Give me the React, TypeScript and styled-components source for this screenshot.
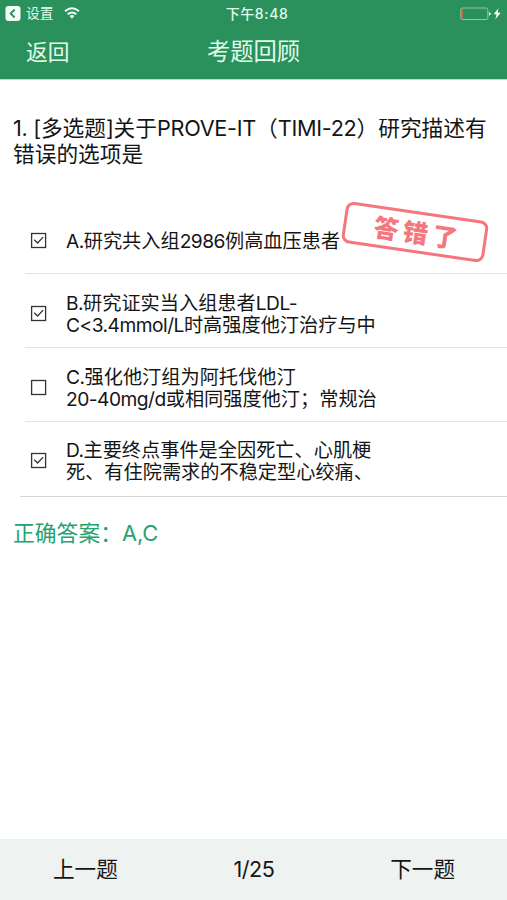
import React from "react";
import styled, { createGlobalStyle } from "styled-components";

const GlobalStyle = createGlobalStyle`
  * { box-sizing: border-box; }
  body {
    margin: 0;
    background: #fff;
    color: #151515;
    font-family: Inter, "Noto Sans CJK SC", sans-serif;
  }
`;

const Screen = styled.div`
  width: 507px;
  height: 900px;
  display: flex;
  flex-direction: column;
  overflow: hidden;
  background: #fff;
`;

const Header = styled.header`
  height: 80px;
  flex: none;
  background: #2a915c;
  border-bottom: 1px solid #b4dfc4;
  color: #e2fbea;
`;

const StatusBar = styled.div`
  height: 27px;
  display: grid;
  grid-template-columns: 1fr auto 1fr;
  align-items: center;
  padding: 0 5px 0 5px;
  font-size: 13.7px;
  line-height: 24px;
`;

const StatusGroup = styled.div<{ $end?: boolean }>`
  display: flex;
  align-items: center;
  justify-content: ${(p) => (p.$end ? "flex-end" : "flex-start")};
`;

const BackApp = styled.span`
  margin: 0 11px 1px 5px;
`;

const Clock = styled.span`
  font-weight: 500;
  font-size: 14px;
  letter-spacing: 0.6px;
  margin: 0 0 0 7px;
`;

const NavBar = styled.nav`
  height: 50px;
  display: grid;
  grid-template-columns: 1fr auto 1fr;
  align-items: center;
  padding: 0 26px;
  font-size: 21.7px;
  line-height: 48px;
`;

const NavTitle = styled.h1`
  margin: 0;
  font-size: 23.3px;
  font-weight: 400;
`;

const Content = styled.main`
  flex: 1;
  padding-top: 35px;
`;

const Question = styled.h2`
  margin: 0;
  padding: 1px 0 0 13px;
  height: 87px;
  font-size: 21.7px;
  line-height: 25.5px;
  font-weight: 400;
`;

const Line = styled.span`
  display: block;
  white-space: nowrap;
`;

const Latin = styled.span<{ $tracking: number }>`
  letter-spacing: ${(p) => p.$tracking}em;
`;

const Options = styled.ul`
  list-style: none;
  margin: 0;
  padding: 0;
  position: relative;
`;

const Option = styled.li<{ $last?: boolean; $height: number }>`
  height: ${(p) => p.$height}px;
  margin-left: ${(p) => (p.$last ? 20 : 25)}px;
  padding-left: ${(p) => (p.$last ? 10 : 5)}px;
  padding-top: ${(p) => (p.$last ? 2 : 5)}px;
  border-bottom: 1px solid ${(p) => (p.$last ? "#d6d6d6" : "#e5e5e5")};
  display: flex;
  align-items: center;
  gap: 19px;
`;

const OptionText = styled.div`
  padding-top: 2px;
  font-size: 19.2px;
  line-height: 22px;
`;

const Stamp = styled.div`
  position: absolute;
  left: 343px;
  top: 9px;
  width: 144px;
  height: 42px;
  border: 3px solid #f4777e;
  border-radius: 8px;
  transform: rotate(8.3deg);
  display: flex;
  align-items: center;
  justify-content: center;
  padding: 1px 0 0 6px;
  color: #f4777e;
  font-size: 25px;
  font-weight: 900;
  letter-spacing: 4.6px;
  line-height: 34px;
`;

const Answer = styled.p`
  margin: 22px 0 0 13px;
  color: #26a271;
  font-size: 21.8px;
  line-height: 28px;
`;

const Footer = styled.footer`
  height: 61px;
  flex: none;
  background: #eef2f1;
  display: flex;
  align-items: center;
  justify-content: space-between;
  padding: 0 52px 2px 53px;
  font-size: 21.6px;
  line-height: 58px;
`;

const BackIcon = () => (
  <svg width="16" height="16" viewBox="0 0 16 16">
    <rect x="0.5" y="0" width="15" height="15" rx="3" fill="#f4fff8" />
    <path d="M9.7 3.5L5.6 7.5l4.1 4" fill="none" stroke="#2a915c" strokeWidth="1.8" />
  </svg>
);

const WifiIcon = () => (
  <svg width="16" height="13" viewBox="0 0 16 13">
    <g fill="none" stroke="#f0fff5" strokeWidth="1.9">
      <path d="M1 4.3Q8-1.7 15 4.3" />
      <path d="M3.7 7.3Q8 3.5 12.3 7.3" />
    </g>
    <path d="M5.6 9Q8 7.2 10.4 9L8 11.7z" fill="#f0fff5" />
  </svg>
);

const BatteryIcon = () => (
  <svg width="42" height="14" viewBox="0 0 42 14">
    <rect x="0.8" y="1" width="27" height="11.5" rx="1.8" fill="none" stroke="#8fc9a8" />
    <path d="M1.3 2h1.7v9.5H1.3z" fill="#c96a4c" />
    <path d="M28.9 4.9q2 .4 2 1.9t-2 1.9z" fill="#d9f5e3" />
    <path d="M38.4 1.2l-4.7 6h2.8L35.4 12.2l5.3-6.5h-3z" fill="#f4fff8" />
  </svg>
);

const Checkbox = ({ checked }: { checked: boolean }) => (
  <svg width="17" height="17" viewBox="0 0 17 17">
    <rect x="1.6" y="1.5" width="14" height="14" fill="none" stroke="#333" strokeWidth="1.3" />
    {checked && <path d="M4.2 7.8l3.4 3.2 5.5-5.9" fill="none" stroke="#333" strokeWidth="1.3" />}
  </svg>
);

const questionLines = ["1. [多选题]关于PROVE-IT（TIMI-22）研究描述有", "错误的选项是"];

const options: { checked: boolean; height: number; lines: string[] }[] = [
  { checked: true, height: 72, lines: ["A.研究共入组2986例高血压患者"] },
  {
    checked: true,
    height: 74,
    lines: ["B.研究证实当入组患者LDL-", "C<3.4mmol/L时高强度他汀治疗与中"],
  },
  {
    checked: false,
    height: 74,
    lines: ["C.强化他汀组为阿托伐他汀", "20-40mg/d或相同强度他汀；常规治"],
  },
  {
    checked: true,
    height: 75,
    lines: ["D.主要终点事件是全因死亡、心肌梗", "死、有住院需求的不稳定型心绞痛、"],
  },
];

/* Tightens the Latin runs so they sit evenly beside the Chinese glyphs. */
const MixedText = ({ text, tracking }: { text: string; tracking: number }) => (
  <>
    {text.split(/([\x20-\x7e]+)/).map((run, i) =>
      i % 2 ? (
        <Latin key={i} $tracking={tracking}>
          {run}
        </Latin>
      ) : (
        run
      ),
    )}
  </>
);

const Lines = ({ lines, tracking }: { lines: string[]; tracking: number }) => (
  <>
    {lines.map((line) => (
      <Line key={line}>
        <MixedText text={line} tracking={tracking} />
      </Line>
    ))}
  </>
);

export default function App() {
  return (
    <Screen>
      <GlobalStyle />
      <Header>
        <StatusBar>
          <StatusGroup>
            <BackIcon />
            <BackApp>设置</BackApp>
            <WifiIcon />
          </StatusGroup>
          <Clock>下午8:48</Clock>
          <StatusGroup $end>
            <BatteryIcon />
          </StatusGroup>
        </StatusBar>
        <NavBar>
          <span>返回</span>
          <NavTitle>考题回顾</NavTitle>
        </NavBar>
      </Header>
      <Content>
        <Question>
          <Lines lines={questionLines} tracking={-0.014} />
        </Question>
        <Options>
          {options.map((option, i) => (
            <Option key={i} $height={option.height} $last={i === options.length - 1}>
              <Checkbox checked={option.checked} />
              <OptionText>
                <Lines lines={option.lines} tracking={-0.027} />
              </OptionText>
            </Option>
          ))}
          <Stamp as="li">答错了</Stamp>
        </Options>
        <Answer>正确答案：A,C</Answer>
      </Content>
      <Footer>
        <span>上一题</span>
        <Latin $tracking={-0.02}>1/25</Latin>
        <span>下一题</span>
      </Footer>
    </Screen>
  );
}
